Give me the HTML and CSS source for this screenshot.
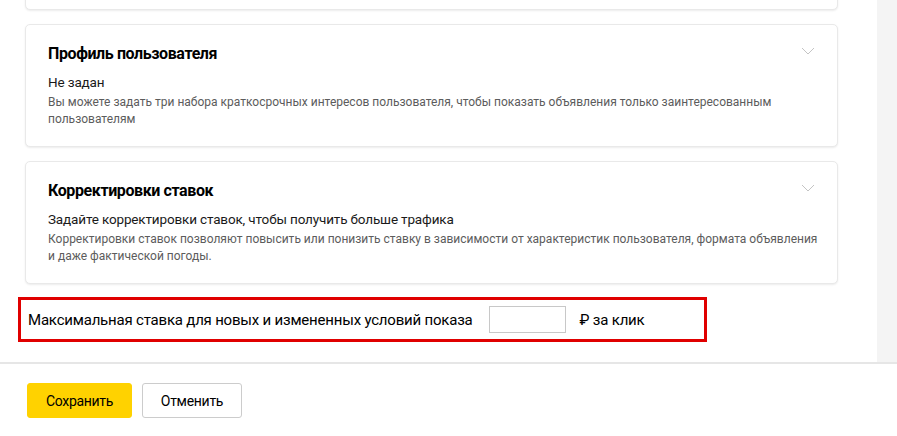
FILE: index.html
```html
<!DOCTYPE html>
<html lang="ru">
  <head>
    <meta charset="UTF-8" />
    <meta name="viewport" content="width=device-width, initial-scale=1.0" />
    <title>Настройки группы</title>
    <link rel="stylesheet" href="styles.css">
  </head>
  <body>
    <div class="layout">
      <div class="content">
        <div class="card card--cut"></div>

        <div class="card">
          <div class="card__head">
            <div class="card__title">Профиль пользователя</div>
            <svg class="card__arrow" width="14" height="8" viewBox="0 0 14 8">
              <polyline points="1,1 7,7 13,1" fill="none" stroke="#c4c4c4" stroke-width="1" />
            </svg>
          </div>
          <div class="card__value">Не задан</div>
          <div class="card__hint">Вы можете задать три набора краткосрочных интересов пользователя, чтобы показать объявления только заинтересованным пользователям</div>
        </div>

        <div class="card">
          <div class="card__head">
            <div class="card__title">Корректировки ставок</div>
            <svg class="card__arrow" width="14" height="8" viewBox="0 0 14 8">
              <polyline points="1,1 7,7 13,1" fill="none" stroke="#c4c4c4" stroke-width="1" />
            </svg>
          </div>
          <div class="card__value">Задайте корректировки ставок, чтобы получить больше трафика</div>
          <div class="card__hint">Корректировки ставок позволяют повысить или понизить ставку в зависимости от характеристик пользователя, формата объявления и даже фактической погоды.</div>
        </div>

        <div class="bid">
          <span class="bid__label">Максимальная ставка для новых и измененных условий показа</span>
          <input class="bid__input" type="text" />
          <span class="bid__unit">₽ за клик</span>
        </div>
      </div>
      <div class="side"></div>
    </div>

    <div class="footer">
      <button class="btn btn--save">Сохранить</button>
      <button class="btn btn--cancel">Отменить</button>
    </div>
  </body>
</html>
```

FILE: styles.css
```css
* {
  box-sizing: border-box;
}
body {
  margin: 0;
  font-family: Roboto, "Liberation Sans", Arial, sans-serif;
  color: #000;
  background: #fff;
}
.layout {
  display: flex;
  border-bottom: 2px solid #e6e6e6;
  overflow: hidden;
}
.content {
  flex: 1;
  padding: 0 39px 20px 25px;
}
.side {
  width: 20px;
  background: #f4f4f4;
}

.card {
  background: #fff;
  border: 1px solid #e9e9e9;
  border-radius: 5px;
  box-shadow: 0 1px 2px rgba(0, 0, 0, 0.08);
  padding: 19px 20px 18px 22px;
  margin-bottom: 14px;
}
.card--cut {
  height: 30px;
  margin-top: -20px;
  padding: 0;
}
.card__head {
  display: flex;
  justify-content: space-between;
  align-items: flex-start;
  padding-right: 2px;
}
.card__title {
  font-size: 16px;
  font-weight: bold;
  line-height: 20px;
  letter-spacing: -0.4px;
}
.card__arrow {
  margin-top: 3px;
}
.card__value {
  margin-top: 9px;
  font-size: 13.5px;
  line-height: 18px;
  letter-spacing: -0.15px;
  color: #1a1a1a;
}
.card__hint {
  margin: 3px -8px 0 0;
  font-size: 12px;
  line-height: 17px;
  color: #5c5c5c;
}

.bid {
  display: flex;
  align-items: center;
  width: 689px;
  height: 45px;
  margin: -1px 0 0 -7px;
  padding: 0 7px;
  border: 3px solid #e00000;
  font-size: 15px;
  letter-spacing: -0.2px;
}
.bid__input {
  width: 77px;
  height: 27px;
  margin: 0 14px 0 16px;
  border: 1px solid #c8c8c8;
  border-radius: 0;
  outline: none;
}

.footer {
  display: flex;
  gap: 10px;
  padding: 19px 27px;
}
.btn {
  height: 35px;
  padding: 0;
  border: 1px solid #ccc;
  border-radius: 3px;
  background: #fff;
  font-family: inherit;
  font-size: 14px;
  letter-spacing: -0.3px;
  color: #000;
}
.btn--save {
  width: 105px;
  background: #ffd200;
  border-color: #ffd200;
}
.btn--cancel {
  width: 100px;
}
```
